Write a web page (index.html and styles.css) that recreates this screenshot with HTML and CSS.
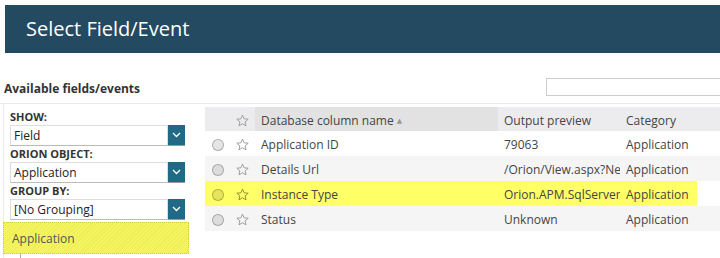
FILE: index.html
```html
<!DOCTYPE html>
<html lang="en">
  <head>
    <meta charset="UTF-8" />
    <title>Select Field/Event</title>
    <link rel="stylesheet" href="styles.css">
  </head>
  <body>
    <div class="dialog-title">Select Field/Event</div>

    <div class="toolbar">
      <span class="section-title">Available fields/events</span>
      <input class="search" type="text" />
    </div>

    <div class="content">
      <div class="filters">
        <div class="filter-label">SHOW:</div>
        <div class="select">
          <span class="select-value">Field</span>
          <span class="select-arrow">
            <svg width="9" height="6" viewBox="0 0 9 6"><polyline points="1,1 4.5,4.5 8,1" fill="none" stroke="#fff" stroke-width="1.3" /></svg>
          </span>
        </div>

        <div class="filter-label">ORION OBJECT:</div>
        <div class="select">
          <span class="select-value">Application</span>
          <span class="select-arrow">
            <svg width="9" height="6" viewBox="0 0 9 6"><polyline points="1,1 4.5,4.5 8,1" fill="none" stroke="#fff" stroke-width="1.3" /></svg>
          </span>
        </div>

        <div class="filter-label">GROUP BY:</div>
        <div class="select">
          <span class="select-value">[No Grouping]</span>
          <span class="select-arrow">
            <svg width="9" height="6" viewBox="0 0 9 6"><polyline points="1,1 4.5,4.5 8,1" fill="none" stroke="#fff" stroke-width="1.3" /></svg>
          </span>
        </div>

        <div class="group-item">Application</div>
        <div class="tree-tick"></div>
      </div>

      <table class="fields">
        <colgroup>
          <col class="col-radio" />
          <col class="col-star" />
          <col class="col-name" />
          <col class="col-preview" />
          <col class="col-category" />
          <col class="col-filler" />
        </colgroup>
        <thead>
          <tr>
            <th></th>
            <th><svg class="star" width="13" height="13" viewBox="0 0 24 24"><polygon points="12,2 15,8.9 22.5,9.6 16.8,14.5 18.5,21.8 12,18 5.5,21.8 7.2,14.5 1.5,9.6 9,8.9" /></svg></th>
            <th class="sorted">Database column name <span class="sort-arrow">▲</span></th>
            <th>Output preview</th>
            <th>Category</th>
            <th></th>
          </tr>
        </thead>
        <tbody>
          <tr>
            <td><span class="radio"></span></td>
            <td><svg class="star" width="13" height="13" viewBox="0 0 24 24"><polygon points="12,2 15,8.9 22.5,9.6 16.8,14.5 18.5,21.8 12,18 5.5,21.8 7.2,14.5 1.5,9.6 9,8.9" /></svg></td>
            <td>Application ID</td>
            <td>79063</td>
            <td>Application</td>
            <td></td>
          </tr>
          <tr class="alt">
            <td><span class="radio"></span></td>
            <td><svg class="star" width="13" height="13" viewBox="0 0 24 24"><polygon points="12,2 15,8.9 22.5,9.6 16.8,14.5 18.5,21.8 12,18 5.5,21.8 7.2,14.5 1.5,9.6 9,8.9" /></svg></td>
            <td>Details Url</td>
            <td><span class="clip">/Orion/View.aspx?Ne</span></td>
            <td>Application</td>
            <td></td>
          </tr>
          <tr class="highlight">
            <td><span class="radio"></span></td>
            <td><svg class="star" width="13" height="13" viewBox="0 0 24 24"><polygon points="12,2 15,8.9 22.5,9.6 16.8,14.5 18.5,21.8 12,18 5.5,21.8 7.2,14.5 1.5,9.6 9,8.9" /></svg></td>
            <td>Instance Type</td>
            <td><span class="clip">Orion.APM.SqlServer</span></td>
            <td>Application</td>
            <td class="filler"></td>
          </tr>
          <tr class="alt">
            <td><span class="radio"></span></td>
            <td><svg class="star" width="13" height="13" viewBox="0 0 24 24"><polygon points="12,2 15,8.9 22.5,9.6 16.8,14.5 18.5,21.8 12,18 5.5,21.8 7.2,14.5 1.5,9.6 9,8.9" /></svg></td>
            <td>Status</td>
            <td>Unknown</td>
            <td>Application</td>
            <td></td>
          </tr>
        </tbody>
      </table>
    </div>
  </body>
</html>
```

FILE: styles.css
```css
:root {
  --header: #244a62;
  --dropdown: #216a86;
  --text: #333;
  --text-row: #444;
  --divider: #ebebeb;
  --row-alt: #f5f5f5;
  --yellow: #ffff66;
}

* {
  margin: 0;
  padding: 0;
  box-sizing: border-box;
}

body {
  font-family: 'Open Sans', 'DejaVu Sans', sans-serif;
  font-size: 12px;
  color: var(--text);
  background: #fff;
  width: 720px;
  height: 258px;
  overflow: hidden;
}

.dialog-title {
  margin: 5px 0 0 5px;
  height: 48px;
  padding-left: 21px;
  background-color: var(--header);
  color: #fff;
  font-size: 20px;
  line-height: 48px;
  white-space: nowrap;
}

.toolbar {
  display: flex;
  align-items: center;
  justify-content: space-between;
  padding: 25px 0 7px 4px;
  height: 50px;
}

.section-title {
  font-weight: 700;
  font-size: 12px;
  margin-top: 2px;
}

.search {
  width: 200px;
  height: 18px;
  border: 1px solid #ccc;
  margin-right: -26px;
  flex-shrink: 0;
}

.content {
  display: flex;
  align-items: flex-start;
  border-top: 1px solid var(--divider);
}

.filters {
  width: 186px;
  margin-left: 3px;
  padding-top: 5px;
  border-left: 1px solid var(--divider);
  flex-shrink: 0;
  height: 154px;
}

.filter-label {
  margin-left: 6px;
  height: 16px;
  line-height: 16px;
  font-size: 11px;
  font-weight: 700;
  color: #333;
}

.select {
  display: flex;
  margin-left: 6px;
  width: 175px;
  height: 21px;
}

.select-value {
  flex: 1;
  border: 1px solid #ddd;
  border-bottom-color: #bbb;
  padding-left: 3px;
  line-height: 19px;
  color: #222;
  background: #fff;
}

.select-arrow {
  width: 17px;
  display: flex;
  align-items: center;
  justify-content: center;
  background-color: var(--dropdown);
  border-bottom: 1px solid #999;
}

.group-item {
  margin: 2px 0 0 -1px;
  height: 32px;
  padding-left: 8px;
  line-height: 31px;
  color: #555;
  border: 1px dotted #cfcf3a;
  background: repeating-linear-gradient(135deg, #f4f45e 0 2px, #eded58 2px 3px);
}

.tree-tick {
  margin-left: 16px;
  width: 1px;
  height: 6px;
  background: #aaa;
}

.fields {
  margin: 3px 0 0 16px;
  border-collapse: collapse;
  table-layout: fixed;
  width: 515px;
  flex-shrink: 0;
}

.col-radio { width: 25px; }
.col-star { width: 25px; }
.col-name { width: 243px; }
.col-preview { width: 122px; }
.col-category { width: 77px; }
.col-filler { width: 23px; }

.fields th {
  height: 24px;
  padding-top: 2px;
  background-color: #ececee;
  font-weight: 400;
  text-align: left;
  padding-left: 6px;
  color: #444;
  white-space: nowrap;
}

.fields th.sorted {
  background-color: #e2e2e2;
}

.sort-arrow {
  font-size: 7px;
  color: #999;
  vertical-align: 2px;
}

.fields td {
  height: 25px;
  padding-top: 2px;
  padding-left: 6px;
  color: var(--text-row);
  white-space: nowrap;
  overflow: hidden;
}

.clip {
  display: block;
  overflow: hidden;
  width: 116px;
}

.fields th:nth-child(-n+2),
.fields td:nth-child(-n+2) {
  padding-left: 0;
  padding-top: 0;
  text-align: center;
}

.fields tr.alt td {
  background-color: var(--row-alt);
}

.fields tr.highlight td {
  background-color: var(--yellow);
}

.fields tr.highlight td.filler {
  background-color: transparent;
}

.radio {
  display: inline-block;
  width: 12px;
  height: 12px;
  border-radius: 50%;
  border: 1px solid rgba(0, 0, 0, 0.25);
  background: rgba(0, 0, 0, 0.1);
  vertical-align: middle;
}

.star {
  vertical-align: middle;
  fill: none;
  stroke: #999;
  stroke-width: 1.7;
  stroke-linejoin: round;
}

.highlight .star {
  stroke: #8a8a30;
}
```
